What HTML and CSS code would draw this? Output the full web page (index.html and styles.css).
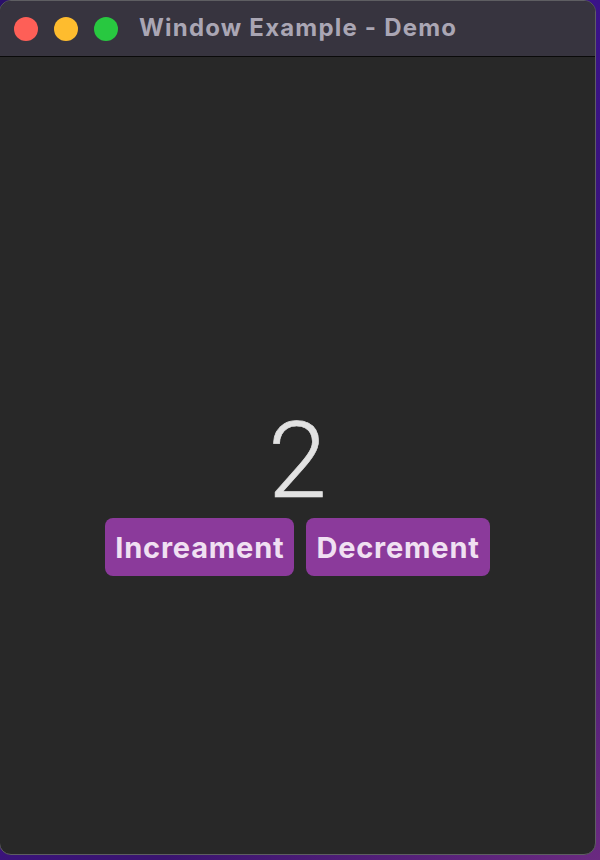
FILE: index.html
```html
<!DOCTYPE html>
<html>
<head>
<meta charset="utf-8">
<link rel="stylesheet" href="styles.css">
</head>
<body>
<div class="desktop">
  <div class="window">
    <div class="titlebar">
      <div class="lights">
        <span class="light red"></span>
        <span class="light yellow"></span>
        <span class="light green"></span>
      </div>
      <div class="title">Window Example - Demo</div>
    </div>
    <div class="content">
      <div class="count">2</div>
      <div class="buttons">
        <button class="btn">Increament</button>
        <button class="btn">Decrement</button>
      </div>
    </div>
  </div>
</div>
</body>
</html>
```
FILE: styles.css
```css
html, body {
  margin: 0;
  padding: 0;
}
body {
  width: 600px;
  height: 860px;
  overflow: hidden;
  font-family: Inter, "Open Sans", sans-serif;
}
.desktop {
  width: 600px;
  height: 860px;
  background: linear-gradient(135deg, #2a0f6a 0%, #3a138a 40%, #3a1470 70%, #6a2a80 100%);
  display: flex;
}
.window {
  width: 597px;
  height: 855px;
  margin-left: -1px;
  box-sizing: border-box;
  border: 1px solid #5e5e62;
  border-radius: 12px;
  overflow: hidden;
  display: flex;
  flex-direction: column;
  background: #282828;
}
.titlebar {
  height: 56px;
  flex: none;
  background: #37343f;
  border-bottom: 1px solid #0a0a0a;
  display: flex;
  align-items: center;
  gap: 21px;
  padding-left: 14px;
  box-sizing: border-box;
}
.lights {
  display: flex;
  gap: 16px;
}
.light {
  width: 24px;
  height: 24px;
  border-radius: 50%;
}
.red { background: #fe5f57; }
.yellow { background: #febc2e; }
.green { background: #28c840; }
.title {
  color: #aaa6b4;
  font-weight: 700;
  font-size: 24px;
  letter-spacing: 1.2px;
  margin-top: -2px;
}
.content {
  flex: 1;
  display: flex;
  flex-direction: column;
  align-items: center;
  justify-content: center;
  padding-top: 76px;
}
.count {
  color: #e2e2e2;
  font-family: Roboto, sans-serif;
  font-weight: 300;
  font-size: 106px;
  line-height: 100px;
  -webkit-text-stroke: 0.6px #e2e2e2;
}
.buttons {
  display: flex;
  gap: 12px;
  margin-top: 7px;
}
.btn {
  background: #8b3a9b;
  color: #f0e0f2;
  border: none;
  border-radius: 8px;
  height: 58px;
  padding: 0 10px;
  font-family: Inter, "Open Sans", sans-serif;
  font-weight: 700;
  font-size: 29px;
  letter-spacing: 0.8px;
}
```
